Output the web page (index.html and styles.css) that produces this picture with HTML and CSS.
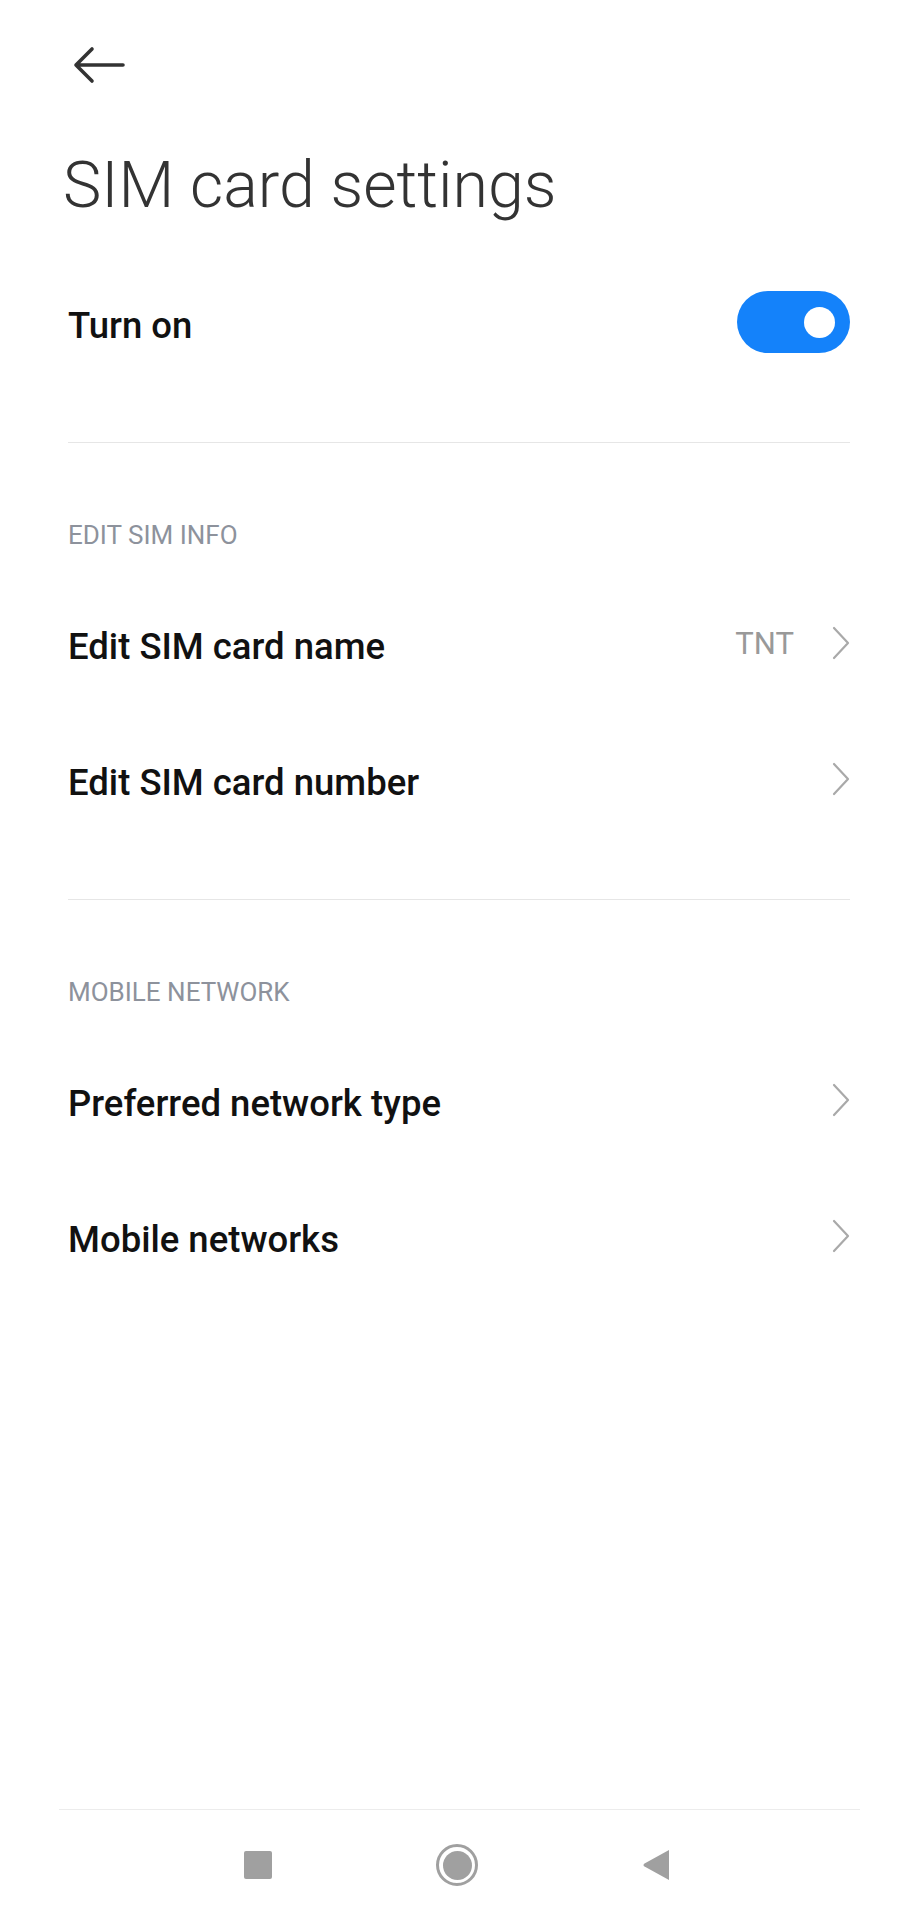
FILE: index.html
```html
<!DOCTYPE html>
<html lang="en">

<head>
    <meta charset="UTF-8">
    <meta name="viewport" content="width=device-width, initial-scale=1.0">
    <title>SIM card settings</title>

    <link rel="stylesheet" href="styles.css">
</head>

<body>
    <div class="page">
        <div class="topbar">
            <svg class="back" width="52" height="38" viewBox="0 0 52 38">
                <path d="M3 19 H50 M19 3 L3 19 L19 35" />
            </svg>
        </div>

        <h1 class="title">SIM card settings</h1>

        <div class="section">
            <div class="row">
                <span class="label">Turn on</span>
                <div class="toggle"><span class="knob"></span></div>
            </div>
        </div>

        <div class="section">
            <h2 class="section-head">EDIT SIM INFO</h2>
            <div class="row">
                <span class="label">Edit SIM card name</span>
                <span class="value">TNT</span>
                <svg class="chevron" width="18" height="34" viewBox="0 0 18 34">
                    <path d="M2 2 L16 17 L2 32" />
                </svg>
            </div>
            <div class="row">
                <span class="label">Edit SIM card number</span>
                <span class="value"></span>
                <svg class="chevron" width="18" height="34" viewBox="0 0 18 34">
                    <path d="M2 2 L16 17 L2 32" />
                </svg>
            </div>
        </div>

        <div class="section last">
            <h2 class="section-head">MOBILE NETWORK</h2>
            <div class="row">
                <span class="label">Preferred network type</span>
                <svg class="chevron" width="18" height="34" viewBox="0 0 18 34">
                    <path d="M2 2 L16 17 L2 32" />
                </svg>
            </div>
            <div class="row">
                <span class="label">Mobile networks</span>
                <svg class="chevron" width="18" height="34" viewBox="0 0 18 34">
                    <path d="M2 2 L16 17 L2 32" />
                </svg>
            </div>
        </div>
    </div>

    <div class="navbar">
        <span class="nav-btn"><span class="nav-square"></span></span>
        <span class="nav-btn"><span class="nav-home"><span class="nav-dot"></span></span></span>
        <span class="nav-btn">
            <svg width="28" height="32" viewBox="0 0 28 32">
                <path d="M27 1 L27 31 L2.5 17.6 Q0.5 16 2.5 14.4 Z" />
            </svg>
        </span>
    </div>
</body>

</html>
```

FILE: styles.css
```css
* {
    box-sizing: border-box;
    margin: 0;
    padding: 0;
}

html,
body {
    height: 100%;
}

body {
    background-color: #fff;
    color: #111;
    display: flex;
    flex-direction: column;
    font-family: Roboto, "Noto Sans", sans-serif;
    min-height: 100vh;
}

.page {
    padding: 0 68px 0 68px;
}

.topbar {
    padding: 46px 0 0 5px;
    height: 145px;
}

.back {
    display: block;
}

.back path {
    fill: none;
    stroke: #333;
    stroke-linecap: round;
    stroke-linejoin: round;
    stroke-width: 3.6;
}

.title {
    color: #333;
    font-size: 64.5px;
    font-weight: 300;
    line-height: 80px;
    margin-left: -5px;
    margin-bottom: 29px;
}

.section {
    border-bottom: 1px solid #e6e6e6;
    padding-bottom: 52px;
}

.section + .section {
    padding-top: 52px;
}

.section.last {
    border-bottom: none;
}

.section-head {
    color: #8d929c;
    font-size: 26px;
    font-weight: 400;
    line-height: 80px;
}

.row {
    align-items: center;
    display: flex;
    height: 136px;
}

.label {
    flex: 1;
    font-size: 36.5px;
    font-weight: 500;
    padding-top: 6px;
}

.value {
    color: #999;
    font-size: 31px;
    margin-right: 38px;
}

.chevron path {
    fill: none;
    stroke: #a9a9a9;
    stroke-linecap: round;
    stroke-linejoin: round;
    stroke-width: 2.2;
}

.toggle {
    align-items: center;
    background-color: #1482fa;
    border-radius: 31px;
    display: flex;
    height: 62px;
    justify-content: flex-end;
    padding: 0 15px;
    width: 113px;
}

.knob {
    background-color: #fff;
    border-radius: 50%;
    height: 31px;
    width: 31px;
}

.navbar {
    align-items: center;
    border-top: 1px solid #ececec;
    display: flex;
    gap: 151px;
    height: 111px;
    margin: auto 58px 0 59px;
    padding-left: 175px;
}

.nav-btn {
    align-items: center;
    display: flex;
    height: 48px;
    justify-content: center;
    width: 48px;
}

.nav-btn svg path {
    fill: #a0a0a0;
}

.nav-square {
    background-color: #a0a0a0;
    border-radius: 2px;
    height: 28px;
    width: 28px;
}

.nav-home {
    align-items: center;
    border: 3px solid #a0a0a0;
    border-radius: 50%;
    display: flex;
    height: 42px;
    justify-content: center;
    width: 42px;
}

.nav-dot {
    background-color: #a0a0a0;
    border-radius: 50%;
    height: 29px;
    width: 29px;
}
```
